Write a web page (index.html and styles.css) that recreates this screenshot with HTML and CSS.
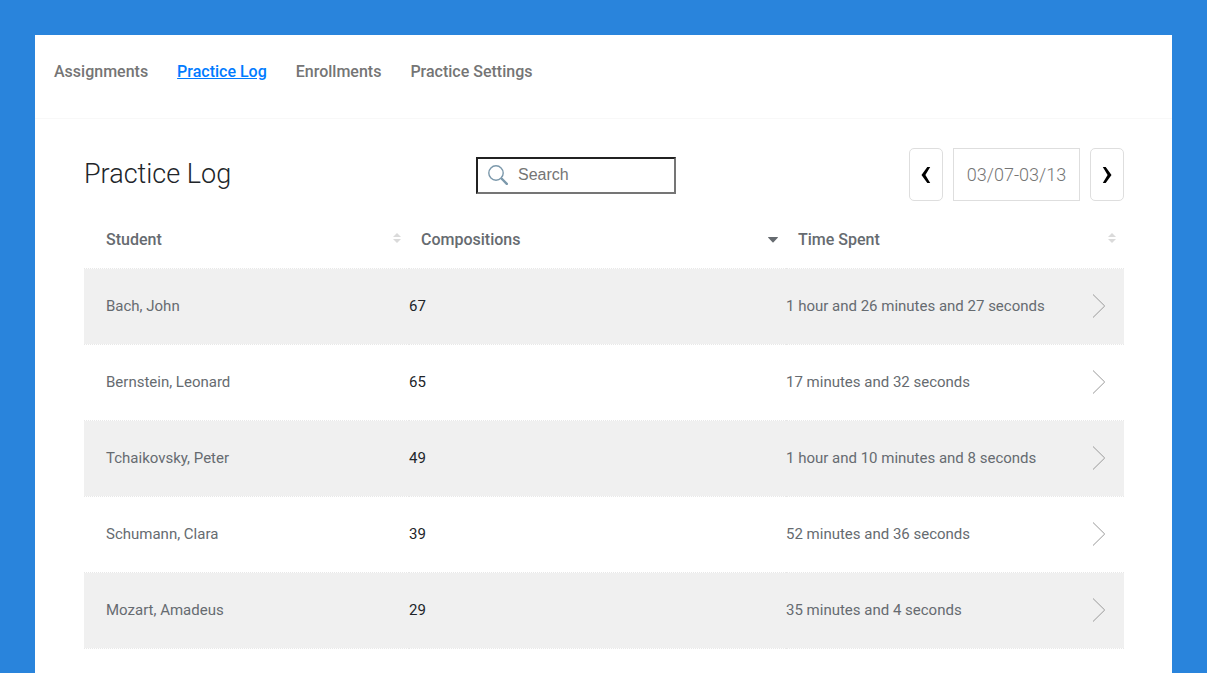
FILE: index.html
```
<!DOCTYPE html>
<html lang="en">
<head>
<meta charset="utf-8">
<meta name="viewport" content="width=device-width, initial-scale=1">
<title>Practice Log</title>
<link rel="stylesheet" href="styles.css">
</head>
<body>
<div class="panel">
  <nav class="tabs" aria-label="Sections">
    <a href="#assignments">Assignments</a>
    <a class="active" href="#practice-log" aria-current="page">Practice Log</a>
    <a href="#enrollments">Enrollments</a>
    <a href="#settings">Practice Settings</a>
  </nav>
  <main class="content">
    <header class="toolbar">
      <h1>Practice Log</h1>
      <label class="search">
        <svg width="20" height="20" viewBox="0 0 20 20" fill="none" stroke="#7b98ab" aria-hidden="true"><circle cx="8" cy="8" r="7.2" stroke-width="1.4"/><path d="M13 13l1.5 1.5" stroke-width="1.4"/><path d="M14 14l4.8 4.8" stroke-width="2.4" stroke-linecap="round"/></svg>
        <input type="search" placeholder="Search" aria-label="Search">
      </label>
      <div class="range">
        <button class="step" type="button" aria-label="Previous week"><svg width="10" height="16" viewBox="0 0 10 16" aria-hidden="true"><path d="M6.3 0H9.2L4.4 8L9.2 16H6.3L.5 8z"/></svg></button>
        <button class="dates" type="button">03/07-03/13</button>
        <button class="step" type="button" aria-label="Next week"><svg width="10" height="16" viewBox="0 0 10 16" aria-hidden="true"><path d="M3.7 0H.8L5.6 8L.8 16H3.7L9.5 8z"/></svg></button>
      </div>
    </header>
    <table class="log">
      <colgroup><col class="col-student"><col class="col-count"><col class="col-time"></colgroup>
      <thead>
        <tr>
          <th scope="col"><button class="sort" type="button">Student<svg class="both" width="8" height="10" viewBox="0 0 8 10" aria-hidden="true"><path d="M0 4L4 0L8 4zM0 6H8L4 10z"/></svg></button></th>
          <th scope="col" aria-sort="descending"><button class="sort" type="button">Compositions<svg width="10" height="6" viewBox="0 0 10 6" aria-hidden="true"><path d="M0 .5Q0 0 .5 0H9.5Q10 0 10 .5L5.5 5.3Q5 5.8 4.5 5.3z"/></svg></button></th>
          <th scope="col"><button class="sort" type="button">Time Spent<svg class="both" width="8" height="10" viewBox="0 0 8 10" aria-hidden="true"><path d="M0 4L4 0L8 4zM0 6H8L4 10z"/></svg></button></th>
        </tr>
      </thead>
      <tbody>
        <tr><td>Bach, John</td><td class="count">67</td><td><a class="detail" href="#bach">1 hour and 26 minutes and 27 seconds<svg width="14" height="24" viewBox="0 0 14 24" aria-hidden="true"><path d="M1 .5L12.7 12L1 23.5"/></svg></a></td></tr>
        <tr><td>Bernstein, Leonard</td><td class="count">65</td><td><a class="detail" href="#bernstein">17 minutes and 32 seconds<svg width="14" height="24" viewBox="0 0 14 24" aria-hidden="true"><path d="M1 .5L12.7 12L1 23.5"/></svg></a></td></tr>
        <tr><td>Tchaikovsky, Peter</td><td class="count">49</td><td><a class="detail" href="#tchaikovsky">1 hour and 10 minutes and 8 seconds<svg width="14" height="24" viewBox="0 0 14 24" aria-hidden="true"><path d="M1 .5L12.7 12L1 23.5"/></svg></a></td></tr>
        <tr><td>Schumann, Clara</td><td class="count">39</td><td><a class="detail" href="#schumann">52 minutes and 36 seconds<svg width="14" height="24" viewBox="0 0 14 24" aria-hidden="true"><path d="M1 .5L12.7 12L1 23.5"/></svg></a></td></tr>
        <tr><td>Mozart, Amadeus</td><td class="count">29</td><td><a class="detail" href="#mozart">35 minutes and 4 seconds<svg width="14" height="24" viewBox="0 0 14 24" aria-hidden="true"><path d="M1 .5L12.7 12L1 23.5"/></svg></a></td></tr>
      </tbody>
    </table>
  </main>
</div>
</body>
</html>
```
FILE: styles.css
```
* { box-sizing: border-box; }

body {
  display: flex;
  flex-direction: column;
  min-height: 100vh;
  margin: 0;
  padding: 35px 35px 0;
  background: #2984dc;
  color: #212529;
  font: 16px/24px Roboto, "Liberation Sans", sans-serif;
}

button { font: inherit; cursor: pointer; }

.panel { flex: 1; background: #fff; }

.tabs {
  display: flex;
  gap: 29px;
  padding: 25px 19px 34px;
  border-bottom: 1px solid #f8f8f8;
  font-weight: 500;
}
.tabs a { color: #757575; text-decoration: none; }
.tabs .active { color: #007bff; text-decoration: underline; }

.content { padding: 29px 48px 24px 49px; }

.toolbar {
  display: grid;
  grid-template-columns: 7fr 200px 8fr;
  align-items: center;
}
.toolbar h1 { margin: 0; font-size: 27px; font-weight: 300; line-height: 36px; padding-bottom: 2px; }

.search {
  display: flex;
  align-items: center;
  gap: 10px;
  height: 37px;
  margin-top: 1px;
  padding: 0 10px;
  border: 2px solid;
  border-color: #212121 #757575 #757575 #212121;
}
.search svg { flex: none; }
.search input {
  flex: 1;
  min-width: 0;
  padding: 0 0 1px;
  border: 0;
  outline: 0;
  background: none;
  font: 16px/24px "Liberation Sans", Arial, sans-serif;
}
.search input::placeholder { color: #757575; opacity: 1; }

.range { display: flex; justify-content: flex-end; gap: 10px; height: 53px; }
.range button { border: 1px solid #dedede; background: #fff; }
.step {
  display: flex;
  align-items: center;
  justify-content: center;
  width: 34px;
  padding: 0;
  border-radius: 5px;
}
.range .dates { min-width: 127px; padding: 0 12px; color: #757575; font-size: 18px; font-weight: 300; }

.log {
  width: 100%;
  margin-top: 9px;
  border-collapse: separate;
  border-spacing: 0;
  table-layout: fixed;
}
.col-student { width: 31.25%; }
.col-count { width: 36.25%; }

.log th { height: 58px; padding: 2px 8px 0 12px; }
.log th:first-child { padding-left: 22px; }
.sort {
  display: flex;
  align-items: center;
  justify-content: space-between;
  width: 100%;
  padding: 0;
  border: 0;
  background: none;
  color: #666b70;
  font-weight: 500;
}
.sort svg { fill: #666b70; }
.sort .both { fill: #dadada; margin-bottom: 4px; }

.log td {
  height: 76px;
  padding: 0 0 2px;
  border-top: 1px dotted #e8e8e8;
  background-clip: padding-box;
  color: #666b70;
  font-size: 15px;
}
.log td:first-child { padding-left: 22px; }
.log td.count { color: #212529; }
.log tbody tr:nth-child(odd) td { background-color: #f0f0f0; }
.log tbody tr:last-child td { height: 77px; border-bottom: 1px dotted #e8e8e8; }
.detail {
  display: flex;
  align-items: center;
  justify-content: space-between;
  padding-right: 18px;
  color: inherit;
  text-decoration: none;
}
.detail svg { flex: none; fill: none; stroke: #999; }
```
